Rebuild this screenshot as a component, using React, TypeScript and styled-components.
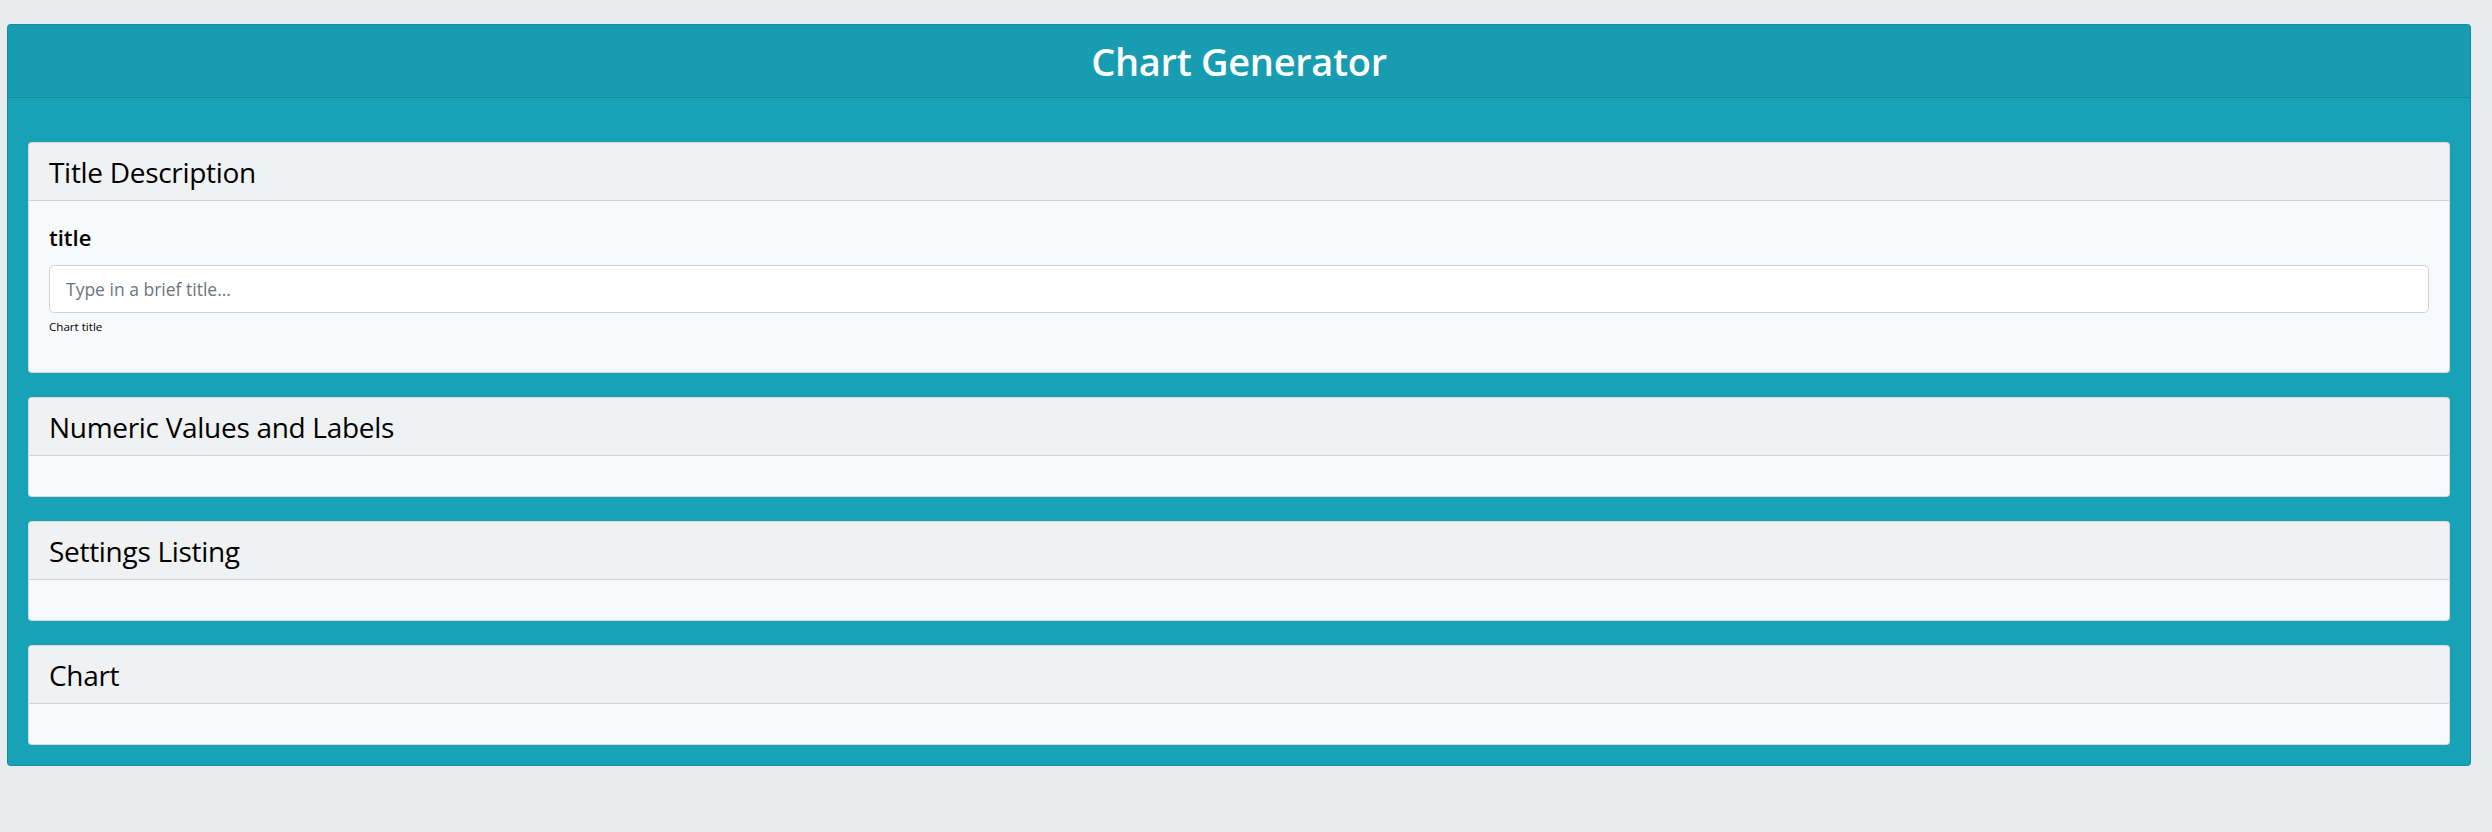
import React from "react";
import styled, { createGlobalStyle } from "styled-components";

const GlobalStyle = createGlobalStyle`
  html, body {
    margin: 0;
    padding: 0;
    background: #e9ecef;
    font-family: "Open Sans", "Noto Sans", Arial, sans-serif;
    color: #212529;
  }
  * { box-sizing: border-box; }
`;

const Page = styled.div`
  padding: 24px 21px 40px 7px;
`;

const MainCard = styled.section`
  background: #18a2b8;
  border: 1px solid rgba(0, 0, 0, 0.125);
  border-radius: 4px;
  overflow: hidden;
`;

const MainHeader = styled.header`
  background: rgba(0, 0, 0, 0.03);
  border-bottom: 1px solid rgba(0, 0, 0, 0.125);
  padding: 12px 20px;
`;

const MainTitle = styled.h1`
  margin: 0;
  text-align: center;
  color: #ffffff;
  font-size: 38px;
  font-weight: 600;
  line-height: 48px;
  letter-spacing: -0.3px;
`;

const MainBody = styled.div`
  padding: 20px;
  display: flex;
  flex-direction: column;
  gap: 24px;
  padding-top: 44px;
`;

const Panel = styled.div`
  background: #f8f9fa;
  border: 1px solid rgba(0, 0, 0, 0.125);
  border-radius: 4px;
  overflow: hidden;
`;

const PanelHeader = styled.div`
  background: rgba(0, 0, 0, 0.03);
  border-bottom: 1px solid rgba(0, 0, 0, 0.125);
  padding: 13px 20px 11px;
`;

const PanelTitle = styled.h3`
  margin: 0;
  font-size: 28px;
  font-weight: 500;
  line-height: 33px;
  color: #000;
  letter-spacing: -0.3px;
`;

const PanelBody = styled.div`
  padding: 20px;
`;

const FormGroup = styled.div`
  margin-bottom: 16px;
`;

const Label = styled.label`
  display: block;
  font-size: 22px;
  font-weight: 600;
  line-height: 32px;
  margin-bottom: 12px;
  color: #000;
`;

const Input = styled.input`
  display: block;
  width: 100%;
  height: 48px;
  padding: 8px 16px;
  font-family: inherit;
  font-size: 17.5px;
  color: #495057;
  background: #fff;
  border: 1px solid #ced4da;
  border-radius: 4.8px;
  outline: none;
  &::placeholder {
    color: #6c757d;
  }
`;

const Help = styled.small`
  display: block;
  margin-top: 4px;
  font-size: 11.6px;
  line-height: 19px;
  color: #000;
`;

const sections = ["Numeric Values and Labels", "Settings Listing", "Chart"];

export default function App() {
  return (
    <>
      <GlobalStyle />
      <Page>
        <MainCard>
          <MainHeader>
            <MainTitle>Chart Generator</MainTitle>
          </MainHeader>
          <MainBody>
            <Panel>
              <PanelHeader>
                <PanelTitle>Title Description</PanelTitle>
              </PanelHeader>
              <PanelBody>
                <FormGroup>
                  <Label htmlFor="title">title</Label>
                  <Input id="title" placeholder="Type in a brief title..." />
                  <Help>Chart title</Help>
                </FormGroup>
              </PanelBody>
            </Panel>
            {sections.map((s) => (
              <Panel key={s}>
                <PanelHeader>
                  <PanelTitle>{s}</PanelTitle>
                </PanelHeader>
                <PanelBody />
              </Panel>
            ))}
          </MainBody>
        </MainCard>
      </Page>
    </>
  );
}
